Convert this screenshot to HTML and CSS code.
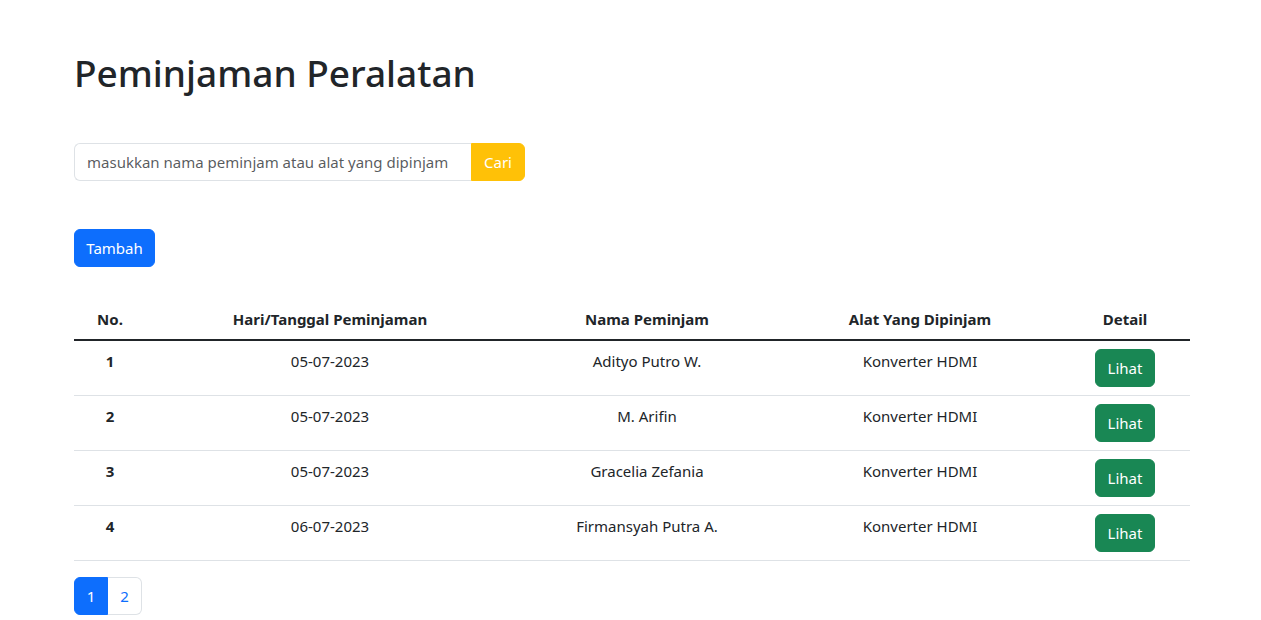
FILE: index.html
```html
<!DOCTYPE html>
<html lang="id">
<head>
<meta charset="utf-8">
<title>Peminjaman Peralatan</title>
<link rel="stylesheet" href="styles.css">
</head>
<body>
<main class="container">
  <h1 class="title">Peminjaman Peralatan</h1>
  <form class="search">
    <input class="search-input" type="text" placeholder="masukkan nama peminjam atau alat yang dipinjam">
    <button class="btn btn-warning search-btn" type="button">Cari</button>
  </form>
  <div class="actions">
    <button class="btn btn-primary" type="button">Tambah</button>
  </div>
  <table class="table">
    <colgroup>
      <col class="c-no"><col class="c-date"><col class="c-name"><col class="c-tool"><col class="c-detail">
    </colgroup>
    <thead>
      <tr><th>No.</th><th>Hari/Tanggal Peminjaman</th><th>Nama Peminjam</th><th>Alat Yang Dipinjam</th><th>Detail</th></tr>
    </thead>
    <tbody>
      <tr><th>1</th><td>05-07-2023</td><td>Adityo Putro W.</td><td>Konverter HDMI</td><td><button class="btn btn-success" type="button">Lihat</button></td></tr>
      <tr><th>2</th><td>05-07-2023</td><td>M. Arifin</td><td>Konverter HDMI</td><td><button class="btn btn-success" type="button">Lihat</button></td></tr>
      <tr><th>3</th><td>05-07-2023</td><td>Gracelia Zefania</td><td>Konverter HDMI</td><td><button class="btn btn-success" type="button">Lihat</button></td></tr>
      <tr><th>4</th><td>06-07-2023</td><td>Firmansyah Putra A.</td><td>Konverter HDMI</td><td><button class="btn btn-success" type="button">Lihat</button></td></tr>
    </tbody>
  </table>
  <nav class="pagination">
    <a class="page-link active" href="#">1</a>
    <a class="page-link" href="#">2</a>
  </nav>
</main>
</body>
</html>
```
FILE: styles.css
```css
* { box-sizing: border-box; }
html, body { margin: 0; padding: 0; }
body {
  font-family: "Noto Sans", "Open Sans", "Liberation Sans", sans-serif;
  font-size: 16px;
  line-height: 1.5;
  color: #212529;
  background: #fff;
}
.container {
  width: 1116px;
  margin-left: 74px;
  padding-top: 51px;
}
.title {
  margin: 0 0 8px 0;
  font-size: 37px;
  font-weight: 500;
  line-height: 1.2;
}
.search {
  display: flex;
  width: 451px;
  margin-top: 48px;
}
.search-input {
  flex: 1;
  height: 38px;
  padding: 6px 12px;
  font: inherit;
  font-size: 15px;
  color: #212529;
  border: 1px solid #dee2e6;
  border-right: none;
  border-radius: 6px 0 0 6px;
  outline: none;
}
.search-input::placeholder { color: rgba(33,37,41,.75); }
.btn {
  display: inline-block;
  height: 38px;
  padding: 6px 12px;
  font: inherit;
  font-size: 15px;
  line-height: 24px;
  border: 1px solid transparent;
  border-radius: 6px;
  color: #fff;
  cursor: pointer;
}
.btn-warning { background: #ffc107; border-color: #ffc107; }
.search-btn { width: 54px; border-radius: 0 6px 6px 0; padding: 6px 0; }
.btn-primary { background: #0d6efd; border-color: #0d6efd; width: 81px; padding: 6px 0; }
.btn-success { background: #198754; border-color: #198754; width: 60px; padding: 6px 0; }
.actions { margin-top: 48px; }
.table {
  width: 1116px;
  margin-top: 32px;
  border-collapse: collapse;
  table-layout: fixed;
  font-size: 15px;
}
.c-no { width: 72px; }
.c-date { width: 368px; }
.c-name { width: 266px; }
.c-tool { width: 280px; }
.c-detail { width: 130px; }
.table th, .table td {
  padding: 8px;
  text-align: center;
  vertical-align: top;
  line-height: 24px;
  border-bottom: 1px solid #dee2e6;
}
.table th { font-weight: 700; }
.table thead th { border-bottom: 2px solid #212529; }
.pagination {
  display: flex;
  margin-top: 16px;
}
.page-link {
  display: block;
  width: 34px;
  height: 38px;
  line-height: 36px;
  text-align: center;
  font-size: 15px;
  color: #0d6efd;
  text-decoration: none;
  border: 1px solid #dee2e6;
  background: #fff;
}
.page-link:first-child { border-radius: 6px 0 0 6px; }
.page-link:last-child { border-radius: 0 6px 6px 0; border-left: none; }
.page-link.active { background: #0d6efd; border-color: #0d6efd; color: #fff; }
```
